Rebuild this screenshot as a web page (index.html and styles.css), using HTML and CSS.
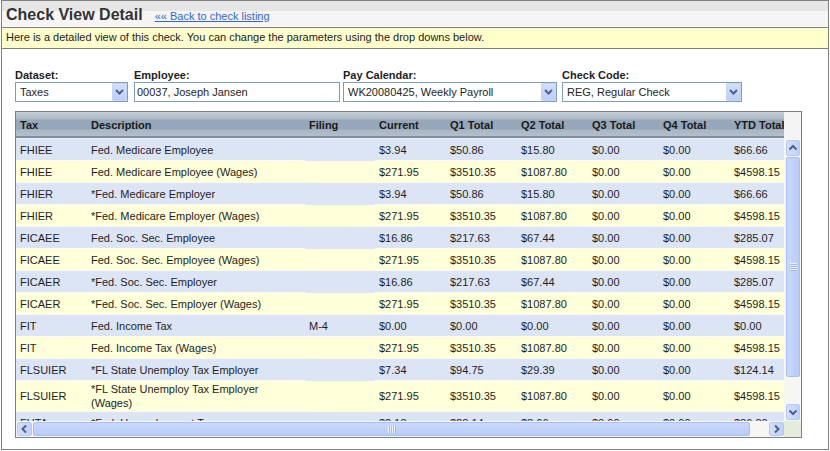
FILE: index.html
```html
<!DOCTYPE html>
<html>
<head>
<meta charset="utf-8">
<title>Check View Detail</title>
<link rel="stylesheet" href="styles.css">
</head>
<body>
<div class="frame">
  <div class="titlebar">
    <h1>Check View Detail</h1>
    <a href="#" class="back">«« Back to check listing</a>
  </div>
  <div class="notice">Here is a detailed view of this check. You can change the parameters using the drop downs below.</div>
  <div class="content">
    <div class="filters">
      <div class="field">
        <label>Dataset:</label>
        <div class="select w-dataset"><span>Taxes</span><span class="btn"><svg width="15" height="18" viewBox="0 0 15 18"><polyline points="4,7 7.5,10.5 11,7" fill="none" stroke="#4d6185" stroke-width="2"/></svg></span></div>
      </div>
      <div class="field">
        <label>Employee:</label>
        <div class="input w-employee">00037, Joseph Jansen</div>
      </div>
      <div class="field">
        <label>Pay Calendar:</label>
        <div class="select w-calendar"><span>WK20080425, Weekly Payroll</span><span class="btn"><svg width="15" height="18" viewBox="0 0 15 18"><polyline points="4,7 7.5,10.5 11,7" fill="none" stroke="#4d6185" stroke-width="2"/></svg></span></div>
      </div>
      <div class="field">
        <label>Check Code:</label>
        <div class="select w-code"><span>REG, Regular Check</span><span class="btn"><svg width="15" height="18" viewBox="0 0 15 18"><polyline points="4,7 7.5,10.5 11,7" fill="none" stroke="#4d6185" stroke-width="2"/></svg></span></div>
      </div>
    </div>

    <div class="grid">
      <div class="head">
        <table class="data">
          <colgroup><col class="c-tax"><col class="c-desc"><col class="c-fil"><col class="c-num"><col class="c-num"><col class="c-num"><col class="c-num"><col class="c-num"><col class="c-ytd"></colgroup>
          <tr><th>Tax</th><th>Description</th><th>Filing</th><th>Current</th><th>Q1 Total</th><th>Q2 Total</th><th>Q3 Total</th><th>Q4 Total</th><th>YTD Total</th></tr>
        </table>
      </div>
      <div class="head-gap"></div>
      <div class="body">
        <table class="data">
          <colgroup><col class="c-tax"><col class="c-desc"><col class="c-fil"><col class="c-num"><col class="c-num"><col class="c-num"><col class="c-num"><col class="c-num"><col class="c-ytd"></colgroup>
          <tr class="a"><td>FHIEE</td><td>Fed. Medicare Employee</td><td class="e"></td><td>$3.94</td><td>$50.86</td><td>$15.80</td><td>$0.00</td><td>$0.00</td><td>$66.66</td></tr>
          <tr class="b"><td>FHIEE</td><td>Fed. Medicare Employee (Wages)</td><td class="e"></td><td>$271.95</td><td>$3510.35</td><td>$1087.80</td><td>$0.00</td><td>$0.00</td><td>$4598.15</td></tr>
          <tr class="a"><td>FHIER</td><td>*Fed. Medicare Employer</td><td class="e"></td><td>$3.94</td><td>$50.86</td><td>$15.80</td><td>$0.00</td><td>$0.00</td><td>$66.66</td></tr>
          <tr class="b"><td>FHIER</td><td>*Fed. Medicare Employer (Wages)</td><td class="e"></td><td>$271.95</td><td>$3510.35</td><td>$1087.80</td><td>$0.00</td><td>$0.00</td><td>$4598.15</td></tr>
          <tr class="a"><td>FICAEE</td><td>Fed. Soc. Sec. Employee</td><td class="e"></td><td>$16.86</td><td>$217.63</td><td>$67.44</td><td>$0.00</td><td>$0.00</td><td>$285.07</td></tr>
          <tr class="b"><td>FICAEE</td><td>Fed. Soc. Sec. Employee (Wages)</td><td class="e"></td><td>$271.95</td><td>$3510.35</td><td>$1087.80</td><td>$0.00</td><td>$0.00</td><td>$4598.15</td></tr>
          <tr class="a"><td>FICAER</td><td>*Fed. Soc. Sec. Employer</td><td class="e"></td><td>$16.86</td><td>$217.63</td><td>$67.44</td><td>$0.00</td><td>$0.00</td><td>$285.07</td></tr>
          <tr class="b"><td>FICAER</td><td>*Fed. Soc. Sec. Employer (Wages)</td><td class="e"></td><td>$271.95</td><td>$3510.35</td><td>$1087.80</td><td>$0.00</td><td>$0.00</td><td>$4598.15</td></tr>
          <tr class="a"><td>FIT</td><td>Fed. Income Tax</td><td>M-4</td><td>$0.00</td><td>$0.00</td><td>$0.00</td><td>$0.00</td><td>$0.00</td><td>$0.00</td></tr>
          <tr class="b"><td>FIT</td><td>Fed. Income Tax (Wages)</td><td class="e"></td><td>$271.95</td><td>$3510.35</td><td>$1087.80</td><td>$0.00</td><td>$0.00</td><td>$4598.15</td></tr>
          <tr class="a"><td>FLSUIER</td><td>*FL State Unemploy Tax Employer</td><td class="e"></td><td>$7.34</td><td>$94.75</td><td>$29.39</td><td>$0.00</td><td>$0.00</td><td>$124.14</td></tr>
          <tr class="b"><td>FLSUIER</td><td>*FL State Unemploy Tax Employer<br>(Wages)</td><td class="e"></td><td>$271.95</td><td>$3510.35</td><td>$1087.80</td><td>$0.00</td><td>$0.00</td><td>$4598.15</td></tr>
          <tr class="a"><td>FUTA</td><td>*Fed. Unemployment Tax</td><td class="e"></td><td>$2.18</td><td>$28.14</td><td>$8.66</td><td>$0.00</td><td>$0.00</td><td>$36.80</td></tr>
        </table>
      </div>
      <div class="vscroll">
        <div class="sbtn v-up"><svg width="14" height="16" viewBox="0 0 14 16"><polyline points="3.5,9.5 7,6 10.5,9.5" fill="none" stroke="#4d6185" stroke-width="2"/></svg></div>
        <div class="vthumb"><div class="vgrip"></div></div>
        <div class="vtrack"></div>
        <div class="sbtn v-down"><svg width="14" height="16" viewBox="0 0 14 16"><polyline points="3.5,6.5 7,10 10.5,6.5" fill="none" stroke="#4d6185" stroke-width="2"/></svg></div>
      </div>
      <div class="hscroll">
        <div class="sbtn h-left"><svg width="15" height="14" viewBox="0 0 15 14"><polyline points="9,3.5 5.5,7 9,10.5" fill="none" stroke="#4d6185" stroke-width="2"/></svg></div>
        <div class="hthumb"><div class="hgrip"></div></div>
        <div class="htrack"></div>
        <div class="sbtn h-right"><svg width="15" height="14" viewBox="0 0 15 14"><polyline points="6,3.5 9.5,7 6,10.5" fill="none" stroke="#4d6185" stroke-width="2"/></svg></div>
      </div>
      <div class="corner"></div>
    </div>
  </div>
</div>
</body>
</html>
```

FILE: styles.css
```css
* { box-sizing: border-box; }

body {
  margin: 0;
  font-family: "Liberation Sans", Arial, sans-serif;
  font-size: 11px;
  color: #1e1e1e;
  background: #fff;
}

.frame {
  margin-left: 1px;
  width: 828px;
  height: 450px;
  border: 1px solid #808080;
}

.titlebar {
  height: 27px;
  border-bottom: 1px solid #808080;
  background: linear-gradient(#e6e6e6 0, #e6e6e6 10px, #f5f5f5 10px, #f5f5f5 25px, #fbfbfb 25px);
  display: flex;
  align-items: baseline;
  padding: 1px 0 0 4px;
}

.titlebar h1 {
  margin: 0;
  font-size: 16px;
  font-weight: bold;
  line-height: 25px;
  color: #333;
}

.back {
  margin-left: 12px;
  font-size: 11px;
  color: #3366cc;
  text-decoration: underline;
}

.notice {
  height: 21px;
  border-bottom: 1px solid #808080;
  background: #ffffcc;
  padding: 2px 0 0 4px;
  line-height: 14px;
  color: #222;
}

.content {
  padding: 20px 0 0 13px;
}

.filters {
  display: grid;
  grid-template-columns: 119px 209px 219px 180px;
}

.field label {
  display: block;
  font-weight: bold;
  line-height: 13px;
  color: #1e1e1e;
}

.select, .input {
  height: 20px;
  border: 1px solid #7f9db9;
  background: #fff;
  display: flex;
  align-items: center;
  line-height: 14px;
  color: #1e1e1e;
}

.select { padding-left: 4px; }
.input { padding-left: 2px; }

.select .btn {
  margin-left: auto;
  width: 15px;
  height: 18px;
  display: block;
  background: linear-gradient(#d2defc, #bccffa);
  border: 1px solid #c5d5f9;
  border-radius: 1px;
}
.select .btn svg { display: block; margin: -1px 0 0 -1px; }

.w-dataset { width: 113px; }
.w-employee { width: 206px; }
.w-calendar { width: 214px; }
.w-code { width: 180px; }

.grid {
  margin-top: 9px;
  width: 787px;
  border: 1px solid #808080;
  display: grid;
  grid-template-columns: 768px 17px;
  grid-template-rows: 27px 282px 16px;
}

.head, .body {
  overflow: hidden;
}

.head-gap {
  background: #f4f4f4;
}

table.data {
  table-layout: fixed;
  width: 788px;
  border-collapse: separate;
  border-spacing: 0;
}

col.c-tax { width: 71px; }
col.c-desc { width: 218px; }
col.c-fil { width: 70px; }
col.c-num { width: 71px; }
col.c-ytd { width: 74px; }

.data th {
  height: 27px;
  padding: 6px 4px 0;
  text-align: left;
  vertical-align: top;
  line-height: 14px;
  font-weight: bold;
  color: #1a1a1a;
  white-space: nowrap;
  background: linear-gradient(#c7cfd8 0, #b9c4cf 3px, #aebbc8 7px, #95a7b9 8px, #95a7b9 17px, #a9b6c3 18px, #b3bfcb 24px, #7f90a1 24px, #7f90a1 26px, #eef1f4 26px);
}

.data td {
  height: 22px;
  padding: 1px 4px;
  line-height: 14px;
  vertical-align: middle;
  border-bottom: 1px solid #fbfbf6;
  white-space: nowrap;
}

tr.a td { background: #dce5f6; }
tr.b td { background: #ffffd9; }
tr.a td.e { border-bottom-color: #dce5f6; }
tr.b td.e { border-bottom-color: #ffffd9; }

.vscroll {
  background: #f6f6f2;
  display: flex;
  flex-direction: column;
  padding: 1px 1px 1px 2px;
}

.sbtn {
  background: linear-gradient(to right, #d3dffd, #bfd1fb);
  border: 1px solid #b4c8f4;
  border-radius: 2px;
}
.sbtn svg { display: block; margin: -1px; }

.v-up, .v-down { width: 14px; height: 16px; flex: none; }

.vthumb {
  margin-top: 1px;
  height: 220px;
  flex: none;
  background: linear-gradient(to right, #cad9fd, #b8ccf9);
  border: 1px solid #a9c0f1;
  border-radius: 2px;
  width: 14px;
  display: flex;
  align-items: center;
  justify-content: center;
}

.vgrip {
  width: 7px;
  height: 8px;
  background: repeating-linear-gradient(#eef3fe 0 1px, #9db8f2 1px 2px);
}

.vtrack { flex: 1; }

.hscroll {
  background: #f6f6f2;
  display: flex;
  padding: 1px 0 1px 1px;
}

.h-left, .h-right { width: 15px; height: 14px; flex: none; }

.hthumb {
  margin-left: 1px;
  width: 717px;
  flex: none;
  background: linear-gradient(#cad9fd, #b8ccf9);
  border: 1px solid #a9c0f1;
  border-radius: 2px;
  display: flex;
  align-items: center;
  justify-content: center;
}

.hgrip {
  width: 8px;
  height: 7px;
  background: repeating-linear-gradient(to right, #eef3fe 0 1px, #9db8f2 1px 2px);
}

.htrack { flex: 1; }

.corner {
  background: #e6ecdc;
}
```
